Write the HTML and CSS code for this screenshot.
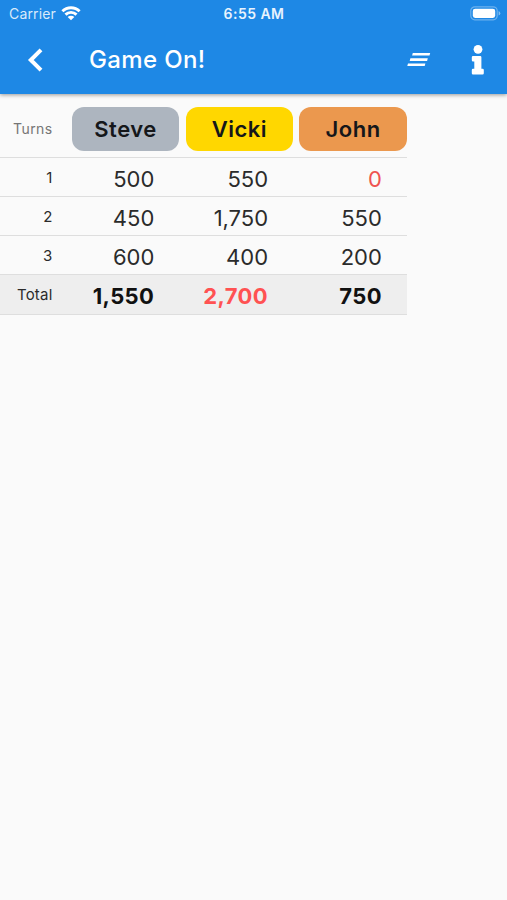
FILE: index.html
```html
<!DOCTYPE html>
<html lang="en">
<head>
<meta charset="utf-8">
<title>Game On!</title>
<link rel="stylesheet" href="styles.css">
</head>
<body>
<header class="header">
  <div class="status">
    <div class="carrier"><span>Carrier</span>
      <svg class="wifi" width="20" height="16" viewBox="0 0 20 16" fill="none" stroke="#fff" stroke-width="2.9">
        <path d="M1.4 6.3a12.2 12.2 0 0 1 17.2 0M4.5 9.6a7.8 7.8 0 0 1 11 0"/>
        <path d="M10 15.3l-3.3-3.3a4.7 4.7 0 0 1 6.6 0z" fill="#fff" stroke="none"/>
      </svg>
    </div>
    <time class="time">6:55 AM</time>
    <svg class="battery" width="31" height="15" viewBox="0 0 31 15">
      <rect x=".8" y=".8" width="26.4" height="13" rx="4" fill="none" stroke="#fff" stroke-opacity=".35" stroke-width="1.2"/>
      <rect x="2.8" y="2.7" width="22.4" height="9.2" rx="2.4" fill="#fff"/>
      <path d="M28.6 5v4.6q1.7-.7 1.7-2.3t-1.7-2.3z" fill="#fff" fill-opacity=".45"/>
    </svg>
  </div>
  <nav class="toolbar">
    <svg class="back" width="16" height="26" viewBox="0 0 16 26" fill="none" stroke="#fff" stroke-width="4"><path d="M14 2.8L3.8 13 14 23.2"/></svg>
    <h1 class="title">Game On!</h1>
    <svg class="sort" width="24" height="16" viewBox="0 0 24 16" fill="#fff"><path d="M5.8 1h17.4l-.7 2.6H5.1zM3.4 6.3h17.4l-.7 2.6H2.7zM1 11.5h17.4l-.7 2.6H.3z"/></svg>
    <svg class="info" width="14" height="32" viewBox="0 0 14 32" fill="#fff"><circle cx="7" cy="5.3" r="4.4"/><path d="M2 12h7.2q1.2 0 1.2 1.2v11.6h1.2q1.2 0 1.2 1.2v3.2q0 1.2-1.2 1.2H2q-1.2 0-1.2-1.2V26q0-1.2 1.2-1.2h1.3v-7.4H2q-1.2 0-1.2-1.2v-3q0-1.2 1.2-1.2z"/></svg>
  </nav>
</header>
<main class="scores">
  <div class="row names">
    <span class="label">Turns</span>
    <span class="chip silver">Steve</span>
    <span class="chip gold">Vicki</span>
    <span class="chip bronze">John</span>
  </div>
  <div class="row"><span class="label">1</span><span class="score">500</span><span class="score">550</span><span class="score red">0</span></div>
  <div class="row"><span class="label">2</span><span class="score">450</span><span class="score">1,750</span><span class="score">550</span></div>
  <div class="row"><span class="label">3</span><span class="score">600</span><span class="score">400</span><span class="score">200</span></div>
  <div class="row total"><span class="label">Total</span><span class="score">1,550</span><span class="score red">2,700</span><span class="score">750</span></div>
</main>
</body>
</html>
```

FILE: styles.css
```css
* { box-sizing: border-box; }
body {
  margin: 0;
  min-height: 900px;
  background: #fafafa;
  color: #2b2b2b;
  font-family: Inter, "Liberation Sans", sans-serif;
}
svg { display: block; flex: none; }
.header {
  height: 94px;
  background: #1e88e5;
  color: #fff;
  box-shadow: 0 1px 4px rgba(0, 0, 0, .4);
}
.status {
  display: grid;
  grid-template-columns: 1fr auto 1fr;
  align-items: center;
  height: 27px;
  padding: 0 6px 0 9px;
  font-size: 14px;
}
.carrier { display: flex; align-items: center; gap: 5px; color: #d9eafa; letter-spacing: .15px; }
.wifi { margin-top: -2px; }
.time { font-weight: 600; color: #e8f3fd; margin-right: 2px; letter-spacing: .45px; }
.battery { justify-self: end; }
.toolbar {
  display: flex;
  align-items: center;
  height: 66px;
  padding: 0 22px 0 27px;
}
.title {
  margin: 0 0 0 46px;
  font-size: 24px;
  font-weight: 500;
  line-height: 32px;
  letter-spacing: .35px;
}
.sort { margin-left: auto; }
.info { margin-left: 40px; }
.scores { width: 407px; }
.row {
  display: grid;
  grid-template-columns: 65.5px 107.5px 107.5px 107.5px;
  column-gap: 6.3px;
  align-items: center;
  height: 39.15px;
  padding-top: 3px;
  border-bottom: 1.5px solid #dedede;
}
.names { height: 64px; padding-top: 7px; }
.label {
  padding-right: 13px;
  text-align: right;
  font-size: 15px;
  line-height: 18px;
  margin-top: -1px;
  letter-spacing: .2px;
}
.names .label { font-size: 14px; color: #757575; letter-spacing: .4px; }
.chip {
  height: 44px;
  border-radius: 12px;
  text-align: center;
  font-size: 22px;
  font-weight: 600;
  line-height: 45px;
  letter-spacing: .5px;
  color: #15171a;
}
.silver { background: #adb5bf; }
.gold { background: #ffd700; }
.bronze { background: #eb984e; }
.score { padding-right: 25px; text-align: right; font-size: 22px; }
.red { color: #ef5350; }
.total { background: #eee; }
.total .score { font-weight: 700; color: #111; letter-spacing: .4px; }
.total .red { color: #ff5252; }
```
